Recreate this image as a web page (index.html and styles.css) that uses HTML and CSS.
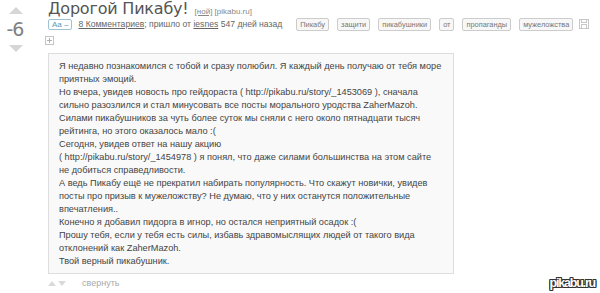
FILE: index.html
```html
<!DOCTYPE html>
<html lang="ru">
<head>
<meta charset="utf-8">
<title>Дорогой Пикабу!</title>
<link rel="stylesheet" href="styles.css">
</head>
<body>
<div class="post">
  <div class="vote">
    <span class="arrow arrow-up"></span>
    <span class="rating">-6</span>
    <span class="arrow arrow-down"></span>
  </div>
  <div class="main">
    <div class="title-row">
      <h1 class="title">Дорогой Пикабу!</h1>
      <span class="source"><a class="src-link" href="#">[ной]</a> [pikabu.ru]</span>
    </div>
    <div class="meta">
      <span class="fontsize">Aa –</span>
      <span class="info"><a href="#">8 Комментариев</a>; пришло от <a href="#">iesnes</a> 547 дней назад</span>
      <span class="tags">
        <span class="tag">Пикабу</span>
        <span class="tag">защити</span>
        <span class="tag">пикабушники</span>
        <span class="tag">от</span>
        <span class="tag">пропаганды</span>
        <span class="tag">мужеложства</span>
      </span>
      <svg class="save" width="10" height="10" viewBox="0 0 10 10"><rect x="0.5" y="0.5" width="9" height="9" fill="#fff" stroke="#c8c8c8"/><rect x="2.5" y="0.5" width="5" height="3" fill="none" stroke="#c8c8c8"/><rect x="2.5" y="5.5" width="5" height="4" fill="none" stroke="#c8c8c8"/></svg>
    </div>
    <div class="expand"><svg width="9" height="9" viewBox="0 0 9 9"><rect x="0.5" y="0.5" width="8" height="8" fill="#fff" stroke="#c4c4c4"/><path d="M4.5 2v5M2 4.5h5" stroke="#b0b0b0"/></svg></div>
    <div class="story">
      Я недавно познакомился с тобой и сразу полюбил. Я каждый день получаю от тебя море<br>
      приятных эмоций.<br>
      Но вчера, увидев новость про гейдораста ( http://pikabu.ru/story/_1453069 ), сначала<br>
      сильно разозлился и стал минусовать все посты морального уродства ZaherMazoh.<br>
      Силами пикабушников за чуть более суток мы сняли с него около пятнадцати тысяч<br>
      рейтинга, но этого оказалось мало :(<br>
      Сегодня, увидев ответ на нашу акцию<br>
      ( http://pikabu.ru/story/_1454978 ) я понял, что даже силами большинства на этом сайте<br>
      не добиться справедливости.<br>
      А ведь Пикабу ещё не прекратил набирать популярность. Что скажут новички, увидев<br>
      посты про призыв к мужеложству? Не думаю, что у них останутся положительные<br>
      впечатления..<br>
      Конечно я добавил пидорга в игнор, но остался неприятный осадок :(<br>
      Прошу тебя, если у тебя есть силы, избавь здравомыслящих людей от такого вида<br>
      отклонений как ZaherMazoh.<br>
      Твой верный пикабушник.
    </div>
    <div class="foot">
      <span class="mini-arrows">
        <span class="mini mini-up"></span>
        <span class="mini mini-down"></span>
      </span>
      <span class="collapse">свернуть</span>
    </div>
  </div>
</div>
<div class="watermark">pikabu.ru</div>
</body>
</html>
```
FILE: styles.css
```css
html, body {
  margin: 0;
  padding: 0;
  background: #fff;
}
body {
  font-family: "Liberation Sans", Arial, sans-serif;
  color: #555;
  width: 600px;
  height: 293px;
  overflow: hidden;
  position: relative;
}
.post {
  display: flex;
  align-items: flex-start;
}
.vote {
  width: 32px;
  flex: none;
  display: flex;
  flex-direction: column;
  align-items: center;
  padding-top: 7px;
}
.arrow {
  width: 0;
  height: 0;
  border-left: 7px solid transparent;
  border-right: 7px solid transparent;
}
.arrow-up {
  border-bottom: 7px solid #d6d6d6;
}
.arrow-down {
  border-top: 7px solid #d6d6d6;
}
.rating {
  font-size: 19px;
  line-height: 20px;
  color: #808080;
  margin: 5px 0 6px -2px;
  font-family: "DejaVu Sans", sans-serif;
  letter-spacing: -1px;
}
.main {
  margin-left: 16px;
  width: 552px;
  flex: none;
}
.title-row {
  display: flex;
  align-items: baseline;
  gap: 6px;
  height: 17px;
  white-space: nowrap;
}
.title {
  margin: 0;
  font-size: 16px;
  font-weight: normal;
  line-height: 17px;
  color: #555;
  font-family: "DejaVu Sans", sans-serif;
  letter-spacing: -0.2px;
}
.source {
  font-size: 8px;
  color: #888;
}
.src-link {
  color: #888;
}
.meta {
  display: flex;
  align-items: center;
  height: 14px;
  font-size: 8.6px;
  color: #666;
  white-space: nowrap;
}
.meta > * {
  flex: none;
}
.fontsize {
  border: 1px solid #9cc3d3;
  border-radius: 2px;
  color: #5a9ab3;
  font-size: 8px;
  line-height: 9px;
  padding: 0 3px;
  margin-right: 6px;
}
.info a {
  color: #666;
}
.tags {
  display: flex;
  gap: 8px;
  margin-left: 14px;
}
.tag {
  border: 1px solid #ccc;
  border-radius: 2px;
  background: #f7f7f7;
  color: #777;
  font-size: 7.4px;
  line-height: 9px;
  padding: 1px 3px;
}
.save {
  margin-left: 6px;
  display: block;
}
.expand {
  margin: 5px 0 0 -3px;
  height: 9px;
}
.expand svg {
  display: block;
}
.story {
  margin-top: 8px;
  width: 384px;
  border: 1px solid #dedede;
  background: #f9f9f9;
  padding: 6px 10px 5px 10px;
  font-size: 9.2px;
  line-height: 13px;
  color: #444;
  white-space: nowrap;
}
.foot {
  display: flex;
  align-items: center;
  margin-top: 3px;
  height: 12px;
}
.mini-arrows {
  display: flex;
  gap: 2px;
  width: 34px;
}
.mini {
  width: 0;
  height: 0;
  border-left: 4px solid transparent;
  border-right: 4px solid transparent;
}
.mini-up {
  border-bottom: 5px solid #dadada;
}
.mini-down {
  border-top: 5px solid #dadada;
}
.collapse {
  font-size: 9px;
  line-height: 12px;
  color: #aaa;
}
.watermark {
  position: absolute;
  right: 5px;
  bottom: 3px;
  font-size: 12.5px;
  line-height: 14px;
  font-weight: bold;
  color: #fff;
  font-family: "Liberation Sans", sans-serif;
  letter-spacing: -1.2px;
  text-shadow: 1px 0 0 #333, -1px 0 0 #333, 0 1px 0 #333, 0 -1px 0 #333, 1px 1px 0 #333, -1px -1px 0 #333, 1px -1px 0 #333, -1px 1px 0 #333;
}
```
